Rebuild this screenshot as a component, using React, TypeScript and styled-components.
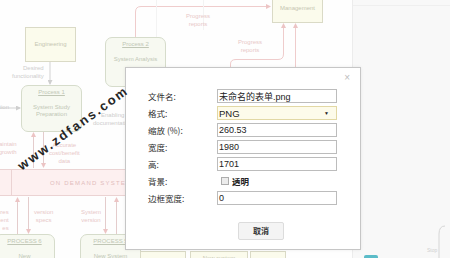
import { Fragment } from "react";
import styled, { createGlobalStyle } from "styled-components";

const GlobalStyle = createGlobalStyle`
  html, body {
    margin: 0;
    padding: 0;
    background: #fff;
  }
  body {
    width: 450px;
    height: 258px;
    overflow: hidden;
    font-family: "Liberation Sans", Arial, sans-serif;
  }
`;

const Page = styled.div`
  position: relative;
  display: flex;
  width: 450px;
  height: 258px;
  overflow: hidden;
  background: #fff;
`;

const Canvas = styled.div`
  position: relative;
  width: 352px;
  height: 100%;
  overflow: hidden;
  background: #fefefe;
`;

const SidePanel = styled.div`
  flex: 1;
  display: flex;
  flex-direction: column;
  background: #f8f8f8;
  border-left: 1px solid #ececec;
`;

const SideHeader = styled.div`
  height: 5px;
  border-bottom: 1px solid #efefef;
`;

const SideFooter = styled.div`
  margin-top: auto;
  display: flex;
  align-items: flex-end;
  justify-content: space-between;
  height: 36px;
  padding: 0 3px 0 11px;
`;

const TealChip = styled.div`
  width: 14px;
  height: 3px;
  border-radius: 2px 2px 0 0;
  background: #5bbcc8;
`;

type Box = { $x: number; $y: number; $w: number; $h: number };

const Node = styled.div<Box & { $tone: "note" | "process" }>`
  position: absolute;
  left: ${(p) => p.$x}px;
  top: ${(p) => p.$y}px;
  width: ${(p) => p.$w}px;
  height: ${(p) => p.$h}px;
  box-sizing: border-box;
  display: flex;
  flex-direction: column;
  align-items: center;
  justify-content: ${(p) => (p.$tone === "note" ? "center" : "flex-start")};
  padding-top: ${(p) => (p.$tone === "note" ? 0 : 3)}px;
  border: 1px solid ${(p) => (p.$tone === "note" ? "#dadac6" : "#d6dccb")};
  border-radius: ${(p) => (p.$tone === "note" ? 0 : 7)}px;
  background: ${(p) => (p.$tone === "note" ? "#fbfbec" : "#f7f9f1")};
  color: ${(p) => (p.$tone === "note" ? "#c6c6b2" : "#c1c7b6")};
  font-size: 6px;
  line-height: 7px;
  text-align: center;
  white-space: nowrap;
`;

const NodeTitle = styled.span`
  text-decoration: underline;
  margin-bottom: 8px;
`;

const Label = styled.div<{ $x: number; $y: number; $pink?: boolean; $align?: string }>`
  position: absolute;
  left: ${(p) => p.$x}px;
  top: ${(p) => p.$y}px;
  color: ${(p) => (p.$pink ? "#e8c8c8" : "#cdcdcd")};
  font-size: 6px;
  line-height: 8px;
  text-align: ${(p) => p.$align || "center"};
  white-space: nowrap;
`;

const DemandBar = styled.div`
  position: absolute;
  left: -1px;
  top: 169px;
  width: 128px;
  height: 27px;
  box-sizing: border-box;
  display: flex;
  align-items: center;
  overflow: hidden;
  border: 1px solid #ebd3d3;
  border-right: none;
  background: #fdf0f0;
`;

const BarCell = styled.div`
  flex: none;
  width: 11px;
  height: 100%;
  border-right: 1px solid #ebd3d3;
`;

const BarText = styled.span`
  padding-left: 38px;
  color: #e2bcbc;
  font-size: 6px;
  letter-spacing: 1.2px;
  white-space: nowrap;
`;

const Wires = styled.svg`
  position: absolute;
  left: 0;
  top: 0;
  pointer-events: none;
`;

const Watermark = styled.span`
  position: absolute;
  left: 73px;
  top: 128px;
  z-index: 10;
  transform: translate(-50%, -50%) rotate(-36deg);
  color: #262626;
  font-family: "Liberation Sans", Arial, sans-serif;
  font-weight: bold;
  font-size: 13px;
  letter-spacing: 2px;
  white-space: nowrap;
`;

const Dialog = styled.div`
  position: absolute;
  left: 125px;
  top: 67px;
  z-index: 5;
  width: 236px;
  height: 183px;
  box-sizing: border-box;
  padding: 21px 0 0 22px;
  background: #fff;
  border: 1px solid #c6c6c6;
  box-shadow: 0 0 3px rgba(0, 0, 0, 0.08);
  font-family: "Liberation Sans", "Noto Sans CJK SC", sans-serif;
`;

const Close = styled.span`
  position: absolute;
  top: 4px;
  right: 10px;
  color: #bdbdbd;
  font-size: 10px;
  line-height: 12px;
`;

const Form = styled.div`
  display: grid;
  grid-template-columns: 69px 120px;
  grid-auto-rows: 14px;
  row-gap: 3px;
  align-items: center;
`;

const FieldLabel = styled.span`
  color: #2e2e2e;
  font-family: "Noto Sans CJK SC", sans-serif;
  font-size: 8.5px;
  line-height: 14px;
  white-space: nowrap;
`;

const Field = styled.div<{ $select?: boolean }>`
  height: 14px;
  box-sizing: border-box;
  display: flex;
  align-items: center;
  justify-content: space-between;
  padding: 0 7px 0 1px;
  border: 1px solid ${(p) => (p.$select ? "#e2d8a4" : "#bcbcbc")};
  background: ${(p) => (p.$select ? "#fdfbea" : "#fff")};
  color: #222;
  font-size: ${(p) => (p.$select ? 9.5 : 9)}px;
  white-space: nowrap;
  overflow: hidden;
`;

const Caret = styled.span`
  font-size: 5px;
  color: #222;
`;

const CheckRow = styled.label`
  display: flex;
  align-items: center;
  gap: 3px;
  padding-left: 4px;
  color: #222;
  font-family: "Noto Sans CJK SC", sans-serif;
  font-size: 8.5px;
  font-weight: bold;
`;

const CheckBox = styled.span`
  width: 6px;
  height: 6px;
  border: 1px solid #adadad;
  background: #ececec;
`;

const Footer = styled.div`
  margin: 15px 0 0 90px;
`;

const Button = styled.button`
  width: 46px;
  height: 18px;
  padding: 0;
  border: 1px solid #dcdcdc;
  border-radius: 2px;
  background: #f4f4f4;
  color: #333;
  font-family: "Noto Sans CJK SC", sans-serif;
  font-size: 8px;
  font-weight: bold;
`;

const rows: { label: string; value: string; select?: boolean }[] = [
  { label: "文件名:", value: "未命名的表单.png" },
  { label: "格式:", value: "PNG", select: true },
  { label: "缩放 (%):", value: "260.53" },
  { label: "宽度:", value: "1980" },
  { label: "高:", value: "1701" },
];

const Diagram = () => (
  <Canvas>
    <Wires width={352} height={258}>
      <defs>
        <marker id="g" markerWidth="5" markerHeight="5" refX="4" refY="2.5" orient="auto">
          <path d="M0 0 L5 2.5 L0 5 Z" fill="#cfcfcf" />
        </marker>
        <marker id="p" markerWidth="5" markerHeight="5" refX="4" refY="2.5" orient="auto">
          <path d="M0 0 L5 2.5 L0 5 Z" fill="#ecc4c4" />
        </marker>
      </defs>
      <g fill="none" strokeWidth="1">
        <path d="M50 62 V84" stroke="#d2d2d2" markerEnd="url(#g)" />
        <path d="M0 108 H20" stroke="#d2d2d2" markerEnd="url(#g)" />
        <path d="M135.5 37 V12 Q135.5 6.5 141 6.5 H270" stroke="#efcccc" markerEnd="url(#p)" />
        <path d="M230.5 70 V64 Q230.5 59.5 236 59.5 H278 Q283.5 59.5 283.5 54 V24" stroke="#efcccc" markerEnd="url(#p)" />
        <path d="M295.5 70 V24" stroke="#efcccc" markerEnd="url(#p)" />
        <path d="M33.5 168 V133" stroke="#e4cccc" markerEnd="url(#p)" />
        <path d="M43.5 131 V167" stroke="#e4cccc" markerEnd="url(#p)" />
        <path d="M17.5 234 V198" stroke="#e4cccc" markerEnd="url(#p)" />
        <path d="M28.5 197 V233" stroke="#e4cccc" markerEnd="url(#p)" />
        <path d="M105.5 197 V233" stroke="#e4cccc" markerEnd="url(#p)" />
        <path d="M116.5 234 V198" stroke="#e4cccc" markerEnd="url(#p)" />
        <path d="M156.5 0 V37 M203.5 0 V30" stroke="#f3f3f3" />
      </g>
    </Wires>

    <Node $tone="note" $x={272} $y={-6} $w={51} $h={29}>
      Management
    </Node>
    <Node $tone="note" $x={25} $y={27} $w={51} $h={35}>
      Engineering
    </Node>
    <Node $tone="process" $x={21} $y={85} $w={61} $h={47}>
      <NodeTitle>Process 1</NodeTitle>
      System Study
      <br />
      Preparation
    </Node>
    <Node $tone="process" $x={105} $y={37} $w={61} $h={50}>
      <NodeTitle>Process 2</NodeTitle>
      System Analysis
    </Node>
    <Node $tone="process" $x={-6} $y={234} $w={61} $h={34}>
      <NodeTitle>PROCESS 6</NodeTitle>
      New
    </Node>
    <Node $tone="process" $x={80} $y={234} $w={61} $h={34}>
      <NodeTitle>PROCESS 5</NodeTitle>
      New System
    </Node>
    <Node $tone="note" $x={140} $y={251} $w={46} $h={14} />
    <Node $tone="note" $x={190} $y={251} $w={58} $h={14}>
      New system
    </Node>
    <Node $tone="note" $x={250} $y={251} $w={36} $h={14} />

    <DemandBar>
      <BarCell />
      <BarText>ON DEMAND SYSTEM D</BarText>
    </DemandBar>

    <Label $x={12} $y={64} $align="right">
      Desired
      <br />
      functionality
    </Label>
    <Label $x={-4} $y={103}>ation</Label>
    <Label $x={93} $y={111}>
      Enabling
      <br />
      documentation
    </Label>
    <Label $x={186} $y={12} $pink>
      Progress
      <br />
      reports
    </Label>
    <Label $x={238} $y={38} $pink>
      Progress
      <br />
      reports
    </Label>
    <Label $x={-6} $y={140} $pink $align="right">
      maintain
      <br />r growth
    </Label>
    <Label $x={49} $y={141} $pink>
      Accurate
      <br />
      cost/benefit
      <br />
      data
    </Label>
    <Label $x={-3} $y={208} $pink $align="right">
      ures
      <br />
      ent
      <br />
      es
    </Label>
    <Label $x={34} $y={208} $pink>
      version
      <br />
      specs
    </Label>
    <Label $x={81} $y={208} $pink>
      System
      <br />
      version
    </Label>
  </Canvas>
);

export default function App() {
  return (
    <>
      <GlobalStyle />
      <Page>
        <Diagram />
        <SidePanel>
          <SideHeader />
          <SideFooter>
            <TealChip />
            <svg width="28" height="34" viewBox="0 0 28 34">
              <path d="M26 2 Q20 2 20 10 V34" fill="none" stroke="#d6d6d6" />
              <text x="8" y="28" fontSize="5" fill="#d0d0d0" fontFamily="Liberation Sans">
                Stop
              </text>
            </svg>
          </SideFooter>
        </SidePanel>

        <Dialog>
          <Close>×</Close>
          <Form>
            {rows.map((r) => (
              <Fragment key={r.label}>
                <FieldLabel>{r.label}</FieldLabel>
                <Field $select={r.select}>
                  {r.value}
                  {r.select && <Caret>▼</Caret>}
                </Field>
              </Fragment>
            ))}
            <FieldLabel>背景:</FieldLabel>
            <CheckRow>
              <CheckBox />
              透明
            </CheckRow>
            <FieldLabel>边框宽度:</FieldLabel>
            <Field>0</Field>
          </Form>
          <Footer>
            <Button>取消</Button>
          </Footer>
        </Dialog>

        <Watermark>www.zdfans.com</Watermark>
      </Page>
    </>
  );
}
